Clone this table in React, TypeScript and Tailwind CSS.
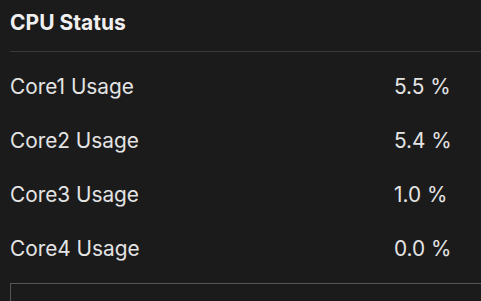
const cores = [
  { name: "Core1 Usage", value: "5.5 %" },
  { name: "Core2 Usage", value: "5.4 %" },
  { name: "Core3 Usage", value: "1.0 %" },
  { name: "Core4 Usage", value: "0.0 %" },
];

export default function App() {
  return (
    <div className="w-[481px] h-[301px] overflow-hidden bg-[#1b1b1b] font-['Inter',sans-serif] text-[#e4e4e4]">
      <div className="w-[560px] pl-[10px]">
        <h2 className="text-[21px] leading-[28px] font-bold text-[#f0f0f0] pt-[9px] pb-[14px]">CPU Status</h2>
        <div className="h-px bg-[#3a3a3a]" />
        <div className="flex flex-col gap-[30px] pt-[23px]">
          {cores.map((c) => (
            <div key={c.name} className="flex text-[20.8px] leading-[24px]">
              <span className="w-[384px]">{c.name}</span>
              <span>{c.value}</span>
            </div>
          ))}
        </div>
        <div className="mt-[22px] h-[40px] border border-[#555]" />
      </div>
    </div>
  );
}
